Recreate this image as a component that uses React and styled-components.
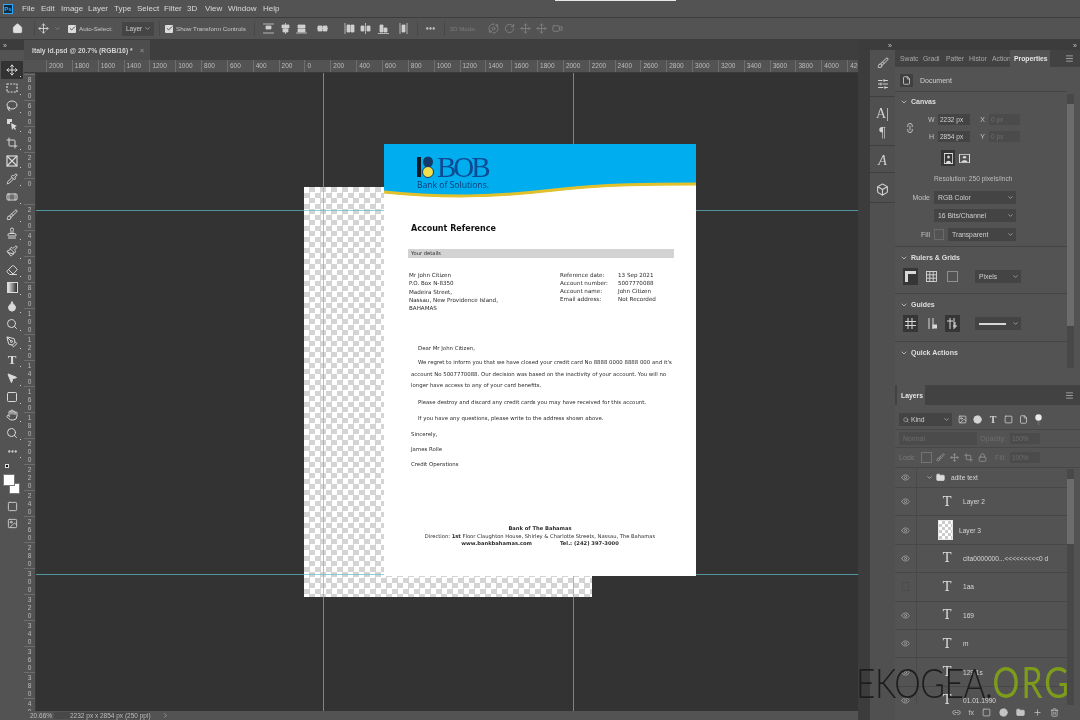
import React from "react";
import styled, { createGlobalStyle } from "styled-components";
import {
  Home, Move, ChevronDown, ChevronRight, Check, Lasso, Crop, Pipette, Bandage, Brush, Stamp, Paintbrush,
  Eraser, Droplet, Search, PenTool, MousePointer2, Hand, Ellipsis, Square, Box, SlidersHorizontal,
  Link2, File, Eye, Folder, Lock, Image as ImageIcon, Circle, Menu, Trash2, Plus, Video, RotateCw, Orbit,
} from "lucide-react";

const GlobalStyle = createGlobalStyle`
  html, body { margin: 0; padding: 0; background: #535353; }
  * { box-sizing: border-box; }
`;

// #region shell
const Screen = styled.div`
  position: relative;
  width: 1080px;
  height: 720px;
  overflow: hidden;
  display: flex;
  flex-direction: column;
  background: #535353;
  color: #d4d4d4;
  font-family: "Liberation Sans", sans-serif;
  font-size: 7px;
  filter: blur(0.45px);
`;

const MenuBar = styled.div`
  height: 18px;
  flex: none;
  display: flex;
  align-items: center;
  padding-left: 3px;
  background: #535353;
  border-bottom: 1px solid #3d3d3d;
`;

const PsLogo = styled.div`
  width: 10px;
  height: 10px;
  margin-right: 9px;
  background: #0c2c44;
  border: 1px solid #31a8ff;
  color: #31a8ff;
  font-size: 6px;
  font-weight: 700;
  line-height: 8px;
  text-align: center;
`;

const MenuItem = styled.span`
  flex: none;
  width: ${(p) => p.$w}px;
  font-size: 8px;
  color: #dadada;
`;

const TopSliver = styled.div`
  position: absolute;
  left: 555px;
  top: 0;
  width: 121px;
  height: 1px;
  background: #e8e8e8;
`;

const OptionsBar = styled.div`
  height: 22px;
  flex: none;
  display: flex;
  align-items: center;
  padding-left: 11px;
  background: #535353;
  border-bottom: 1px solid #3d3d3d;
`;

const Slot = styled.div`
  flex: none;
  display: flex;
  align-items: center;
  justify-content: center;
  width: ${(p) => p.$w}px;
  margin-left: ${(p) => p.$ml || 0}px;
  color: ${(p) => p.$color || "#d6d6d6"};
`;

const OptSep = styled.div`
  flex: none;
  width: 1px;
  height: 15px;
  background: #484848;
`;

const OptLabel = styled.span`
  flex: none;
  width: ${(p) => p.$w}px;
  font-size: 6.2px;
  color: ${(p) => p.$color || "#c8c8c8"};
  white-space: nowrap;
`;

const CheckBoxMark = styled.span`
  flex: none;
  width: 8px;
  height: 8px;
  margin-right: 3px;
  border-radius: 1px;
  background: #dcdcdc;
  color: #444;
  display: flex;
  align-items: center;
  justify-content: center;
`;

const OptSelect = styled.div`
  flex: none;
  width: ${(p) => p.$w}px;
  height: 14px;
  display: flex;
  align-items: center;
  justify-content: space-between;
  padding: 0 3px 0 4px;
  background: #454545;
  font-size: 6.5px;
  color: #cfcfcf;
`;

const Workspace = styled.div`
  flex: 1;
  min-height: 0;
  display: flex;
`;
// #endregion

// #region tools
const ToolColumn = styled.div`
  width: 24px;
  flex: none;
  display: flex;
  flex-direction: column;
  align-items: center;
  background: #535353;
`;

const CollapseBar = styled.div`
  align-self: stretch;
  height: 10px;
  flex: none;
  display: flex;
  align-items: center;
  justify-content: ${(p) => p.$justify || "flex-start"};
  padding: 0 3px;
  background: #3c3c3c;
  color: #c6c6c6;
  font-size: 7px;
  line-height: 1;
`;

const ToolGrip = styled.div`
  height: 11px;
  flex: none;
`;

const ToolBtn = styled.div`
  position: relative;
  width: 22px;
  height: 18.15px;
  flex: none;
  display: flex;
  align-items: center;
  justify-content: center;
  color: #d9d9d9;
  font-family: "Liberation Serif", serif;
  font-weight: 700;
  font-size: 13px;
  border-radius: 1px;
  background: ${(p) => (p.$active ? "#333333" : "transparent")};
  &::after {
    content: "";
    position: absolute;
    right: 2px;
    bottom: 2px;
    width: 1px;
    height: 1px;
    background: #cfcfcf;
  }
`;

const GradientSwatch = styled.div`
  width: 11px;
  height: 11px;
  border: 1px solid #dcdcdc;
  background: linear-gradient(90deg, #e6e6e6, #2d2d2d);
`;

const ColorWell = styled.div`
  position: relative;
  width: 20px;
  height: 38px;
  flex: none;
`;

const Swatch = styled.div`
  position: absolute;
  left: ${(p) => p.$x}px;
  top: ${(p) => p.$y}px;
  width: ${(p) => p.$s}px;
  height: ${(p) => p.$s}px;
  background: ${(p) => p.$bg || "#ffffff"};
  border: 1px solid ${(p) => p.$line || "#777"};
`;

const ModeBtn = styled.div`
  width: 22px;
  height: 17px;
  flex: none;
  display: flex;
  align-items: center;
  justify-content: center;
  color: #cfcfcf;
`;
// #endregion

// #region canvas area
const CenterColumn = styled.div`
  flex: 1;
  min-width: 0;
  display: flex;
  flex-direction: column;
`;

const TabBar = styled.div`
  height: 20px;
  flex: none;
  display: flex;
  background: #3e3e3e;
`;

const DocTab = styled.div`
  width: 126px;
  display: flex;
  align-items: center;
  justify-content: space-between;
  padding: 0 6px 0 8px;
  background: #4d4d4d;
  font-size: 6.8px;
  font-weight: 700;
  color: #d2d2d2;
  white-space: nowrap;
`;

const TabClose = styled.span`
  color: #8a8a8a;
  font-size: 7px;
`;

const HRuler = styled.div`
  height: 13px;
  flex: none;
  display: flex;
  overflow: hidden;
  padding-left: 22px;
  background: #535353;
  border-bottom: 1px solid #3a3a3a;
`;

const HTick = styled.div`
  width: 25.85px;
  flex: none;
  border-left: 1px solid #6e6e6e;
  padding-left: 2px;
  font-size: 6.5px;
  line-height: 12px;
  color: #bcbcbc;
`;

const MiddleRow = styled.div`
  flex: 1;
  min-height: 0;
  display: flex;
`;

const VRuler = styled.div`
  width: 12px;
  flex: none;
  overflow: hidden;
  padding-top: 1px;
  background: #535353;
  border-right: 1px solid #3a3a3a;
`;

const VTick = styled.div`
  height: 26px;
  overflow: hidden;
  border-top: 1px solid #6e6e6e;
  padding-top: 1px;
  display: flex;
  flex-direction: column;
  align-items: center;
  font-size: 6.5px;
  line-height: 8px;
  color: #bcbcbc;
`;

const Canvas = styled.div`
  position: relative;
  flex: 1;
  overflow: hidden;
  background: #333333;
`;

const Transparency = styled.div`
  position: absolute;
  left: 268px;
  top: 114px;
  width: 288px;
  height: 410px;
  background: repeating-conic-gradient(#d4d4d4 0 25%, #ffffff 0 50%) 0 0 / 11px 11px;
`;

const GuideV = styled.div`
  position: absolute;
  left: ${(p) => p.$x}px;
  top: 0;
  bottom: 0;
  width: 1px;
  background: rgba(95, 190, 205, 0.7);
`;

const GuideH = styled.div`
  position: absolute;
  top: ${(p) => p.$y}px;
  left: 0;
  right: 0;
  height: 1px;
  background: rgba(95, 190, 205, 0.7);
`;

const StatusBar = styled.div`
  height: 9px;
  flex: none;
  display: flex;
  align-items: center;
  padding-left: 6px;
  background: #535353;
  font-size: 6.5px;
  color: #bdbdbd;
`;

const StatusZoom = styled.span`
  width: 24px;
  flex: none;
`;

const StatusInfo = styled.span`
  width: 95px;
  flex: none;
  padding-left: 16px;
  background: #484848;
  margin-right: 13px;
  white-space: nowrap;
`;
// #endregion

// #region document
const Page = styled.div`
  position: absolute;
  left: 348px;
  top: 71px;
  width: 312px;
  height: 432px;
  background: #ffffff;
  color: #2a2a2a;
  font-family: "DejaVu Sans", sans-serif;
  font-size: 5.6px;
`;

const PageHeader = styled.div`
  position: relative;
  height: 54px;
  padding: 11px 0 0 33px;
  background: #ffffff;
`;

const WaveArt = styled.svg`
  position: absolute;
  left: 0;
  top: 0;
`;

const LogoWrap = styled.div`
  position: relative;
  display: flex;
  flex-direction: column;
`;

const LogoTop = styled.div`
  display: flex;
  align-items: center;
  height: 24px;
`;

const LogoWord = styled.span`
  margin-left: 3px;
  font-family: "Liberation Serif", serif;
  font-size: 29px;
  letter-spacing: -3px;
  line-height: 24px;
  color: #0d4a94;
`;

const LogoTag = styled.span`
  margin-top: 1px;
  font-family: "Open Sans", sans-serif;
  font-size: 8.6px;
  line-height: 10px;
  color: #0a3a75;
`;

const DocTitle = styled.h1`
  margin: 26px 0 0 27px;
  font-size: 8px;
  line-height: 10px;
  font-weight: 700;
  color: #111;
`;

const DetailsBar = styled.div`
  height: 9px;
  margin: 15px 22px 0 24px;
  padding-left: 3px;
  background: #d3d3d3;
  font-size: 5.2px;
  line-height: 9px;
`;

const AddressRow = styled.div`
  display: flex;
  margin: 13px 0 0 25px;
`;

const AddressCol = styled.div`
  width: 151px;
  flex: none;
  line-height: 8.3px;
`;

const RefGrid = styled.div`
  display: grid;
  grid-template-columns: 58px auto;
  line-height: 8px;
  align-content: start;
`;

const Letter = styled.div`
  margin: 32px 20px 0 27px;
`;

const Para = styled.p`
  margin: 0 0 ${(p) => p.$after || 0}px;
  text-indent: ${(p) => (p.$indent ? 7 : 0)}px;
  line-height: ${(p) => p.$lh || 8}px;
  white-space: nowrap;
  font-size: 5.4px;
`;

const PageFooter = styled.div`
  margin-top: 57px;
  text-align: center;
  font-size: 5.2px;
  line-height: 7.6px;
  white-space: nowrap;
`;

const FooterGap = styled.span`
  display: inline-block;
  width: 28px;
`;
// #endregion

// #region dock
const Dock = styled.div`
  width: 222px;
  flex: none;
  display: flex;
  background: #3c3c3c;
`;

const DockGap = styled.div`
  width: 12px;
  flex: none;
`;

const IconStrip = styled.div`
  width: 25px;
  flex: none;
  display: flex;
  flex-direction: column;
  background: #505050;
`;

const StripGroup = styled.div`
  display: flex;
  flex-direction: column;
  align-items: center;
  gap: ${(p) => p.$gap || 0}px;
  height: ${(p) => p.$h}px;
  padding-top: ${(p) => p.$top || 0}px;
  justify-content: center;
  border-bottom: 1px solid #3f3f3f;
  color: #d2d2d2;
  font-family: "Liberation Serif", serif;
  font-size: 14px;
`;

const PanelColumn = styled.div`
  flex: 1;
  min-width: 0;
  display: flex;
  flex-direction: column;
`;

const TabStrip = styled.div`
  height: ${(p) => p.$h}px;
  flex: none;
  display: flex;
  align-items: stretch;
  padding: 0 6px 0 2px;
  background: #424242;
`;

const PanelTab = styled.div`
  display: flex;
  align-items: center;
  width: ${(p) => p.$w}px;
  padding-left: ${(p) => (p.$active ? 4 : 3)}px;
  flex: none;
  font-size: 6.8px;
  font-weight: ${(p) => (p.$active ? 700 : 400)};
  color: ${(p) => (p.$active ? "#e6e6e6" : "#a8a8a8")};
  background: ${(p) => (p.$active ? "#535353" : "transparent")};
  overflow: hidden;
  white-space: nowrap;
`;

const TabMenu = styled.div`
  margin-left: auto;
  display: flex;
  align-items: center;
  color: #bcbcbc;
`;

const PropsPanel = styled.div`
  height: 318px;
  flex: none;
  display: flex;
  background: #535353;
`;

const PropsBody = styled.div`
  width: 172px;
  flex: none;
`;

const Scrollbar = styled.div`
  flex: 1;
  margin: ${(p) => p.$margin};
  background: #484848;
  display: flex;
  flex-direction: column;
`;

const ScrollThumb = styled.div`
  margin-top: ${(p) => p.$top}px;
  height: ${(p) => p.$h}px;
  background: #6c6c6c;
`;

const Section = styled.div`
  height: ${(p) => p.$h}px;
  padding: ${(p) => p.$pad || "6px 0 0 5px"};
  border-bottom: ${(p) => (p.$last ? "0" : "1px solid #444")};
  display: ${(p) => (p.$row ? "flex" : "block")};
  align-items: center;
`;

const DocGlyph = styled.div`
  width: 13px;
  height: 13px;
  margin-right: 7px;
  display: flex;
  align-items: center;
  justify-content: center;
  background: #404040;
  color: #ddd;
`;

const SectionTitle = styled.div`
  display: flex;
  align-items: center;
  gap: 3px;
  font-size: 7px;
  font-weight: 700;
  line-height: 9px;
  color: #dedede;
`;

const DimBlock = styled.div`
  display: flex;
  align-items: center;
  margin-top: 4px;
`;

const DimLink = styled.div`
  width: 20px;
  flex: none;
  display: flex;
  justify-content: center;
  color: #c8c8c8;
  transform: rotate(90deg);
`;

const DimRows = styled.div`
  margin-left: 8px;
  display: flex;
  flex-direction: column;
`;

const PropRow = styled.div`
  display: flex;
  align-items: center;
  height: ${(p) => p.$h || 17}px;
`;

const PropLabel = styled.span`
  width: ${(p) => p.$w}px;
  flex: none;
  text-align: ${(p) => p.$align || "right"};
  padding-right: 4px;
  font-size: 7px;
  color: ${(p) => p.$color || "#c0c0c0"};
`;

const NumBox = styled.div`
  width: ${(p) => p.$w}px;
  height: 11px;
  flex: none;
  padding-left: 2px;
  background: ${(p) => (p.$dim ? "#4b4b4b" : "#444")};
  font-size: 6.5px;
  line-height: 11px;
  color: ${(p) => (p.$dim ? "#6d6d6d" : "#d0d0d0")};
`;

const DropBox = styled.div`
  width: ${(p) => p.$w}px;
  height: ${(p) => p.$h || 14}px;
  flex: none;
  margin-left: ${(p) => p.$ml || 0}px;
  display: flex;
  align-items: center;
  justify-content: space-between;
  padding: 0 2px 0 4px;
  background: ${(p) => (p.$dim ? "#4b4b4b" : "#444")};
  font-size: 6.8px;
  color: ${(p) => (p.$dim ? "#6d6d6d" : "#cfcfcf")};
`;

const KindLabel = styled.span`
  display: flex;
  align-items: center;
  gap: 2px;
`;

const OrientRow = styled.div`
  display: flex;
  align-items: center;
  gap: 2px;
  margin: 6px 0 0 34px;
`;

const OrientBtn = styled.div`
  width: 14px;
  height: 16px;
  flex: none;
  display: flex;
  align-items: center;
  justify-content: center;
  background: ${(p) => (p.$on ? "#363636" : "transparent")};
  color: #dcdcdc;
`;

const ResolutionText = styled.div`
  margin: 8px 0 5px 34px;
  font-size: 6.6px;
  line-height: 9px;
  color: #bdbdbd;
  white-space: nowrap;
`;

const ToggleGroup = styled.div`
  display: flex;
  align-items: center;
  gap: 6px;
  margin: 6px 0 0 3px;
`;

const IconToggle = styled.div`
  width: 15px;
  height: 17px;
  flex: none;
  display: flex;
  align-items: center;
  justify-content: center;
  background: ${(p) => (p.$on ? "#363636" : "transparent")};
  color: #d8d8d8;
`;

const FillSwatch = styled.div`
  width: 10px;
  height: 11px;
  flex: none;
  border: 1px solid #6a6a6a;
`;

const LinePreview = styled.span`
  width: 27px;
  height: 2px;
  background: #d6d6d6;
`;

const LayersPanel = styled.div`
  flex: 1;
  min-height: 0;
  display: flex;
  flex-direction: column;
  background: #535353;
`;

const FilterRow = styled.div`
  display: flex;
  align-items: center;
  height: ${(p) => p.$h}px;
  padding: ${(p) => p.$top || 0}px 0 0 4px;
  flex: none;
  border-bottom: 1px solid #474747;
  color: #c9c9c9;
`;

const FilterIcon = styled.span`
  width: ${(p) => p.$w || 15.2}px;
  flex: none;
  display: flex;
  justify-content: center;
  color: ${(p) => p.$color || "#d4d4d4"};
  font-family: "Liberation Serif", serif;
  font-weight: 700;
  font-size: 10px;
  line-height: 10px;
`;

const LayerScrollArea = styled.div`
  flex: 1;
  min-height: 0;
  display: flex;
  overflow: hidden;
`;

const LayerList = styled.div`
  width: 172px;
  flex: none;
`;

const LayerRowBox = styled.div`
  height: ${(p) => p.$h || 28.4}px;
  display: flex;
  align-items: center;
  border-bottom: 1px solid #474747;
`;

const EyeCell = styled.div`
  width: 22px;
  height: 100%;
  flex: none;
  display: flex;
  align-items: center;
  justify-content: center;
  color: #a6a6a6;
  border-right: 1px solid #4a4a4a;
`;

const HiddenEye = styled.span`
  width: 7px;
  height: 9px;
  border: 1px solid #4c4c4c;
`;

const TypeGlyph = styled.span`
  width: 16px;
  margin: 0 8px 0 22px;
  flex: none;
  text-align: center;
  font-family: "DejaVu Serif", serif;
  font-size: 13px;
  line-height: 14px;
  color: #dedede;
`;

const LayerThumb = styled.div`
  width: 15px;
  height: 20px;
  flex: none;
  margin: 0 6px 0 21px;
  background: repeating-conic-gradient(#cccccc 0 25%, #ffffff 0 50%) 0 0 / 6px 6px;
  border: 1px solid #e8e8e8;
`;

const LayerName = styled.span`
  font-size: 6.6px;
  color: #d6d6d6;
  white-space: nowrap;
`;

const LayerFooter = styled.div`
  position: absolute;
  left: 895px;
  right: 5px;
  bottom: 0;
  height: 15px;
  display: flex;
  align-items: center;
  justify-content: flex-end;
  gap: 8px;
  padding-right: 16px;
  background: #535353;
  color: #c4c4c4;
`;

const Watermark = styled.div`
  position: absolute;
  left: 856px;
  top: 654px;
  font-family: "Lato", sans-serif;
  font-weight: 300;
  font-size: 42px;
  line-height: 56px;
  letter-spacing: -0.6px;
  color: #1d1d1d;
  white-space: nowrap;
  transform: scaleX(0.8);
  transform-origin: left center;
`;

const WatermarkGreen = styled.span`
  color: #7d9c1c;
  font-weight: 400;
  letter-spacing: 2.6px;
`;
// #endregion

const sw = { strokeWidth: 2 };

const Marquee = () => (
  <svg width="12" height="12" viewBox="0 0 12 12" fill="none" stroke="currentColor" strokeWidth="1.2" strokeDasharray="2 1.2">
    <rect x="1" y="2" width="10" height="8" />
  </svg>
);

const FrameTool = () => (
  <svg width="12" height="12" viewBox="0 0 12 12" fill="none" stroke="currentColor" strokeWidth="1.2">
    <rect x="1" y="1" width="10" height="10" />
    <path d="M1 1l10 10M11 1L1 11" />
  </svg>
);

const ObjectSelect = () => (
  <svg width="12" height="12" viewBox="0 0 12 12" fill="currentColor">
    <path d="M1 1h5v3H4v2H1zM5 5l6 3-2.3 1L10 11l-1 1-1.4-2L6 12z" />
  </svg>
);

const Align = ({ d }) => (
  <svg width="11" height="11" viewBox="0 0 11 11" fill="#cfcfcf" stroke="#cfcfcf" strokeWidth="0.8">
    <path d={d} />
  </svg>
);

const Orient = ({ wide }) => (
  <svg width={wide ? 11 : 9} height={wide ? 9 : 11} viewBox="0 0 11 11" preserveAspectRatio="none" fill="currentColor">
    <path d="M0 0h11v11H0zM1 1v9h9V1z" fillRule="evenodd" />
    <circle cx="5.5" cy="4" r="1.6" />
    <path d="M2.5 10c0-3 6-3 6 0z" />
  </svg>
);

const GridIcon = ({ dotted }) => (
  <svg width="11" height="11" viewBox="0 0 11 11" fill="none" stroke="currentColor" strokeWidth="0.9" strokeDasharray={dotted ? "1 1" : undefined}>
    <rect x="0.5" y="0.5" width="10" height="10" />
    {!dotted && <path d="M3.8 0v11M7.2 0v11M0 3.8h11M0 7.2h11" />}
  </svg>
);

const RulerIcon = () => (
  <svg width="11" height="11" viewBox="0 0 11 11" fill="currentColor">
    <path d="M0 0h11v3H3v8H0z" />
  </svg>
);

const GuidesIcon = ({ variant }) => (
  <svg width="11" height="11" viewBox="0 0 11 11" fill="none" stroke="currentColor" strokeWidth="1">
    <path d="M3 0v11M7 0v11" />
    {variant === 0 && <path d="M0 3.5h11M0 7.5h11" />}
    {variant === 1 && <rect x="7" y="7" width="4" height="3" fill="currentColor" />}
    {variant === 2 && <path d="M0 3h6M8 4v6M6 8h4" />}
  </svg>
);

const Toggle = () => (
  <svg width="9" height="12" viewBox="0 0 9 12">
    <circle cx="4.5" cy="3.5" r="3.2" fill="#ececec" />
    <rect x="3.7" y="7" width="1.6" height="4" fill="#6b6b6b" />
  </svg>
);

const Bob = () => (
  <svg width="17" height="24" viewBox="0 0 17 24">
    <rect x="0" y="2" width="4" height="20" fill="#101820" />
    <ellipse cx="11" cy="7" rx="5" ry="5.5" fill="#123a6b" />
    <circle cx="11" cy="17" r="5.5" fill="#f4e04d" stroke="#123a6b" strokeWidth="1" />
  </svg>
);

// width of each entry is the distance to the next menu word
const MENU = [
  ["File", 19], ["Edit", 20], ["Image", 27], ["Layer", 26], ["Type", 23], ["Select", 27], ["Filter", 23],
  ["3D", 18], ["View", 23], ["Window", 35], ["Help", 24],
];

const ALIGN_ICONS = [
  ["M0 1h11M0 10h11M3 3h5v3H3z", 7.5],
  ["M5.5 0v11M2 2h7v3H2zM3 6h5v3H3z", 6],
  ["M0 10h11M2 2h7v3H2zM2 6h7v3H2z", 5],
  ["M0 5.5h11M1 3h4v5H1zM6 3h4v5H6z", 10],
  ["M1 0v11M3 2h3v7H3zM7 2h3v7H7z", 16],
  ["M5.5 0v11M1 3h3v5H1zM7 3h3v5H7z", 5],
  ["M0 10.5h11M2 2h3v7H2zM6 5h3v4H6z", 7],
  ["M2 0v11M9 0v11M4 2h3v7H4z", 9],
];

const TOOLS = [
  <Move size={12} {...sw} />, <Marquee />, <Lasso size={12} {...sw} />, <ObjectSelect />, <Crop size={12} {...sw} />,
  <FrameTool />, <Pipette size={12} {...sw} />, <Bandage size={12} {...sw} />, <Brush size={12} {...sw} />,
  <Stamp size={12} {...sw} />, <Paintbrush size={12} {...sw} />, <Eraser size={12} {...sw} />, <GradientSwatch />,
  <Droplet size={12} fill="currentColor" />, <Search size={12} {...sw} />, <PenTool size={12} {...sw} />, "T",
  <MousePointer2 size={12} fill="currentColor" />, <Square size={12} />, <Hand size={12} {...sw} />, <Search size={12} {...sw} />,
];

const hLabels = [];
for (let v = -2000; v <= 4200; v += 200) hLabels.push(Math.abs(v));

const vLabels = [];
for (let v = -800; v <= 4000; v += 200) vLabels.push(String(Math.abs(v)));

const LAYERS = [
  { name: "Layer 2" },
  { name: "Layer 3", thumb: true },
  { name: "cita0000000...<<<<<<<<<0 d" },
  { name: "1aa", hidden: true },
  { name: "169" },
  { name: "m" },
  { name: "129 1s" },
  { name: "01.01.1990" },
];

const LayerRow = ({ name, thumb, hidden }) => (
  <LayerRowBox>
    <EyeCell>{hidden ? <HiddenEye /> : <Eye size={9} />}</EyeCell>
    {thumb ? <LayerThumb /> : <TypeGlyph>T</TypeGlyph>}
    <LayerName>{name}</LayerName>
  </LayerRowBox>
);

const PageDoc = () => (
  <Page>
    <PageHeader>
      <WaveArt width="312" height="54" viewBox="0 0 312 54">
        <rect width="312" height="54" fill="#00aeef" />
        <path d="M0 49C60 55 110 54 170 47C220 41 270 41 312 41V54H0Z" fill="#ffffff" />
        <path d="M0 48C60 54 110 53 170 46C220 40 270 40 312 40" fill="none" stroke="#e3c12d" strokeWidth="3" />
      </WaveArt>
      <LogoWrap>
        <LogoTop>
          <Bob />
          <LogoWord>BOB</LogoWord>
        </LogoTop>
        <LogoTag>Bank of Solutions.</LogoTag>
      </LogoWrap>
    </PageHeader>
    <DocTitle>Account Reference</DocTitle>
    <DetailsBar>Your details</DetailsBar>
    <AddressRow>
      <AddressCol>
        <div>Mr John Citizen</div>
        <div>P.O. Box N-8350</div>
        <div>Madeira Street,</div>
        <div>Nassau, New Providence Island,</div>
        <div>BAHAMAS</div>
      </AddressCol>
      <RefGrid>
        <span>Reference date:</span><span>13 Sep 2021</span>
        <span>Account number:</span><span>5007770088</span>
        <span>Account name:</span><span>John Citizen</span>
        <span>Email address:</span><span>Not Recorded</span>
      </RefGrid>
    </AddressRow>
    <Letter>
      <Para $indent $after={5}>Dear Mr John Citizen,</Para>
      <Para $indent $lh={11.5}>We regret to inform you that we have closed your credit card No 8888 0000 8888 000 and it's</Para>
      <Para $lh={11.5}>account No 5007770088. Our decision was based on the inactivity of your account. You will no</Para>
      <Para $lh={11.5} $after={6}>longer have access to any of your card benefits.</Para>
      <Para $indent $after={8}>Please destroy and discard any credit cards you may have received for this account.</Para>
      <Para $indent $after={8}>If you have any questions, please write to the address shown above.</Para>
      <Para $after={7}>Sincerely,</Para>
      <Para $after={7}>James Rolle</Para>
      <Para>Credit Operations</Para>
    </Letter>
    <PageFooter>
      <div><b>Bank of The Bahamas</b></div>
      <div>Direction: <b>1st</b> Floor Claughton House, Shirley &amp; Charlotte Streets, Nassau, The Bahamas</div>
      <div><b>www.bankbahamas.com</b><FooterGap /><b>Tel.: (242) 397-3000</b></div>
    </PageFooter>
  </Page>
);

const App = () => (
  <>
    <GlobalStyle />
    <Screen>
      <TopSliver />
      <MenuBar>
        <PsLogo>Ps</PsLogo>
        {MENU.map(([label, w]) => (
          <MenuItem key={label} $w={w}>{label}</MenuItem>
        ))}
      </MenuBar>

      <OptionsBar>
        <Slot $w={12}><Home size={11} fill="#e0e0e0" /></Slot>
        <Slot $w={11} />
        <OptSep />
        <Slot $w={2} />
        <Slot $w={12}><Move size={11} /></Slot>
        <Slot $w={16} $color="#9a9a9a"><ChevronDown size={7} /></Slot>
        <Slot $w={3} />
        <CheckBoxMark><Check size={7} strokeWidth={3} /></CheckBoxMark>
        <OptLabel $w={43}>Auto-Select:</OptLabel>
        <OptSelect $w={32}>Layer<ChevronDown size={7} /></OptSelect>
        <Slot $w={5} />
        <OptSep />
        <Slot $w={5} />
        <CheckBoxMark><Check size={7} strokeWidth={3} /></CheckBoxMark>
        <OptLabel $w={78}>Show Transform Controls</OptLabel>
        <OptSep />
        {ALIGN_ICONS.map(([d, ml]) => (
          <Slot key={d} $w={11} $ml={ml}><Align d={d} /></Slot>
        ))}
        <Slot $w={8} />
        <OptSep />
        <Slot $w={6} />
        <Slot $w={14}><Ellipsis size={11} strokeWidth={3} /></Slot>
        <Slot $w={6} />
        <OptSep />
        <Slot $w={5} />
        <OptLabel $w={36} $color="#7c7c7c">3D Mode:</OptLabel>
        <Slot $w={16} $color="#808080"><Orbit size={11} /></Slot>
        <Slot $w={16} $color="#808080"><RotateCw size={11} /></Slot>
        <Slot $w={16} $color="#808080"><Move size={11} /></Slot>
        <Slot $w={16} $color="#808080"><Move size={11} /></Slot>
        <Slot $w={16} $color="#808080"><Video size={11} /></Slot>
      </OptionsBar>

      <Workspace>
        <ToolColumn>
          <CollapseBar>»</CollapseBar>
          <ToolGrip />
          {TOOLS.map((icon, i) => (
            <ToolBtn key={i} $active={i === 0}>{icon}</ToolBtn>
          ))}
          <ToolBtn><Ellipsis size={11} strokeWidth={3} /></ToolBtn>
          <ColorWell>
            <Swatch $x={3} $y={4} $s={4} $bg="#111111" $line="#dddddd" />
            <Swatch $x={7} $y={23} $s={11} />
            <Swatch $x={1} $y={14} $s={12} />
          </ColorWell>
          <ModeBtn><Square size={11} /></ModeBtn>
          <ModeBtn><ImageIcon size={11} /></ModeBtn>
        </ToolColumn>

        <CenterColumn>
          <TabBar>
            <DocTab>Italy id.psd @ 20.7% (RGB/16) * <TabClose>×</TabClose></DocTab>
          </TabBar>
          <HRuler>
            {hLabels.map((v, i) => <HTick key={i}>{v}</HTick>)}
          </HRuler>
          <MiddleRow>
            <VRuler>
              {vLabels.map((label, i) => (
                <VTick key={i}>
                  {label.split("").map((c, j) => <span key={j}>{c}</span>)}
                </VTick>
              ))}
            </VRuler>
            <Canvas>
              <Transparency />
              <GuideV $x={287} />
              <GuideV $x={537} />
              <GuideH $y={137} />
              <GuideH $y={501} />
              <PageDoc />
            </Canvas>
          </MiddleRow>
          <StatusBar>
            <StatusZoom>20.66%</StatusZoom>
            <StatusInfo>2232 px x 2854 px (250 ppi)</StatusInfo>
            <ChevronRight size={7} />
          </StatusBar>
        </CenterColumn>

        <Dock>
          <DockGap />
          <IconStrip>
            <CollapseBar $justify="flex-end">»</CollapseBar>
            <StripGroup $h={47} $gap={9}>
              <Brush size={12} />
              <SlidersHorizontal size={12} />
            </StripGroup>
            <StripGroup $h={49} $gap={3} $top={4}>
              <span>A|</span>
              <span>¶</span>
            </StripGroup>
            <StripGroup $h={27} $top={3}><i>A</i></StripGroup>
            <StripGroup $h={30} $top={3}><Box size={13} /></StripGroup>
          </IconStrip>
          <PanelColumn>
            <CollapseBar $justify="flex-end">»</CollapseBar>
            <TabStrip $h={17}>
              <PanelTab $w={23}>Swatc</PanelTab>
              <PanelTab $w={23}>Gradi</PanelTab>
              <PanelTab $w={23}>Patter</PanelTab>
              <PanelTab $w={23}>Histor</PanelTab>
              <PanelTab $w={21}>Action</PanelTab>
              <PanelTab $active $w={40}>Properties</PanelTab>
              <TabMenu><Menu size={9} /></TabMenu>
            </TabStrip>
            <PropsPanel>
              <PropsBody>
                <Section $h={25} $row $pad="3px 0 0 5px">
                  <DocGlyph><File size={9} /></DocGlyph>
                  <PropLabel $w={50} $align="left" $color="#cfcfcf">Document</PropLabel>
                </Section>
                <Section $h={155} $pad="5px 0 0 5px">
                  <SectionTitle><ChevronDown size={8} />Canvas</SectionTitle>
                  <DimBlock>
                    <DimLink><Link2 size={11} /></DimLink>
                    <DimRows>
                      <PropRow $h={18}>
                        <PropLabel $w={10}>W</PropLabel>
                        <NumBox $w={32}>2232 px</NumBox>
                        <PropLabel $w={19}>X</PropLabel>
                        <NumBox $w={31} $dim>0 px</NumBox>
                      </PropRow>
                      <PropRow $h={16}>
                        <PropLabel $w={10}>H</PropLabel>
                        <NumBox $w={32}>2854 px</NumBox>
                        <PropLabel $w={19}>Y</PropLabel>
                        <NumBox $w={31} $dim>0 px</NumBox>
                      </PropRow>
                    </DimRows>
                  </DimBlock>
                  <OrientRow>
                    <Slot $w={5} />
                    <OrientBtn $on><Orient /></OrientBtn>
                    <OrientBtn><Orient wide /></OrientBtn>
                  </OrientRow>
                  <ResolutionText>Resolution: 250 pixels/inch</ResolutionText>
                  <PropRow $h={18}>
                    <PropLabel $w={34}>Mode</PropLabel>
                    <DropBox $w={82} $h={13}>RGB Color<ChevronDown size={7} /></DropBox>
                  </PropRow>
                  <PropRow $h={18}>
                    <PropLabel $w={34} />
                    <DropBox $w={82} $h={13}>16 Bits/Channel<ChevronDown size={7} /></DropBox>
                  </PropRow>
                  <PropRow $h={20}>
                    <PropLabel $w={34}>Fill</PropLabel>
                    <FillSwatch />
                    <DropBox $ml={4} $w={68} $h={13}>Transparent<ChevronDown size={7} /></DropBox>
                  </PropRow>
                </Section>
                <Section $h={47}>
                  <SectionTitle><ChevronDown size={8} />Rulers &amp; Grids</SectionTitle>
                  <ToggleGroup>
                    <IconToggle $on><RulerIcon /></IconToggle>
                    <IconToggle><GridIcon /></IconToggle>
                    <IconToggle><GridIcon dotted /></IconToggle>
                    <Slot $w={3} />
                    <DropBox $w={46} $h={13}>Pixels<ChevronDown size={7} /></DropBox>
                  </ToggleGroup>
                </Section>
                <Section $h={48}>
                  <SectionTitle><ChevronDown size={8} />Guides</SectionTitle>
                  <ToggleGroup>
                    <IconToggle $on><GuidesIcon variant={0} /></IconToggle>
                    <IconToggle><GuidesIcon variant={1} /></IconToggle>
                    <IconToggle $on><GuidesIcon variant={2} /></IconToggle>
                    <Slot $w={3} />
                    <DropBox $w={46} $h={13}><LinePreview /><ChevronDown size={7} /></DropBox>
                  </ToggleGroup>
                </Section>
                <Section $h={43} $last>
                  <SectionTitle><ChevronDown size={8} />Quick Actions</SectionTitle>
                </Section>
              </PropsBody>
              <Scrollbar $margin="27px 6px 17px 0">
                <ScrollThumb $top={10} $h={222} />
              </Scrollbar>
            </PropsPanel>

            <TabStrip $h={20}>
              <PanelTab $active $w={28}>Layers</PanelTab>
              <TabMenu><Menu size={9} /></TabMenu>
            </TabStrip>
            <LayersPanel>
              <FilterRow $h={25} $top={5}>
                <DropBox $w={53} $h={13}><KindLabel><Search size={6} />Kind</KindLabel><ChevronDown size={7} /></DropBox>
                <Slot $w={3} />
                <FilterIcon><ImageIcon size={9} /></FilterIcon>
                <FilterIcon><Circle size={9} fill="currentColor" /></FilterIcon>
                <FilterIcon>T</FilterIcon>
                <FilterIcon><Square size={9} /></FilterIcon>
                <FilterIcon><File size={9} /></FilterIcon>
                <FilterIcon><Toggle /></FilterIcon>
              </FilterRow>
              <FilterRow $h={18}>
                <DropBox $dim $w={78} $h={13}>Normal</DropBox>
                <PropLabel $w={33} $color="#6f6f6f">Opacity:</PropLabel>
                <NumBox $dim $w={30}>100%</NumBox>
              </FilterRow>
              <FilterRow $h={20}>
                <PropLabel $w={20} $color="#7b7b7b">Lock:</PropLabel>
                <FilterIcon $w={14} $color="#9a9a9a"><GridIcon dotted /></FilterIcon>
                <FilterIcon $w={14} $color="#9a9a9a"><Brush size={9} /></FilterIcon>
                <FilterIcon $w={14} $color="#9a9a9a"><Move size={9} /></FilterIcon>
                <FilterIcon $w={14} $color="#9a9a9a"><Crop size={9} /></FilterIcon>
                <FilterIcon $w={14} $color="#9a9a9a"><Lock size={9} /></FilterIcon>
                <PropLabel $w={21} $color="#6f6f6f">Fill:</PropLabel>
                <NumBox $dim $w={30}>100%</NumBox>
              </FilterRow>
              <LayerScrollArea>
                <LayerList>
                  <LayerRowBox $h={20}>
                    <EyeCell><Eye size={9} /></EyeCell>
                    <Slot $w={7} />
                    <Slot $w={10}><ChevronDown size={7} /></Slot>
                    <Slot $w={12}><Folder size={9} fill="#dcdcdc" /></Slot>
                    <Slot $w={5} />
                    <LayerName>adite text</LayerName>
                  </LayerRowBox>
                  {LAYERS.map((l) => <LayerRow key={l.name} {...l} />)}
                </LayerList>
                <Scrollbar $margin="1px 6px 0 0">
                  <ScrollThumb $top={10} $h={65} />
                </Scrollbar>
              </LayerScrollArea>
            </LayersPanel>
          </PanelColumn>
        </Dock>
      </Workspace>

      <LayerFooter>
        <Link2 size={9} />
        <span>fx</span>
        <Square size={9} />
        <Circle size={9} fill="currentColor" />
        <Folder size={9} fill="currentColor" />
        <Plus size={9} />
        <Trash2 size={9} />
      </LayerFooter>
      <Watermark>EKOGEA.<WatermarkGreen>ORG</WatermarkGreen></Watermark>
    </Screen>
  </>
);

export default App;
